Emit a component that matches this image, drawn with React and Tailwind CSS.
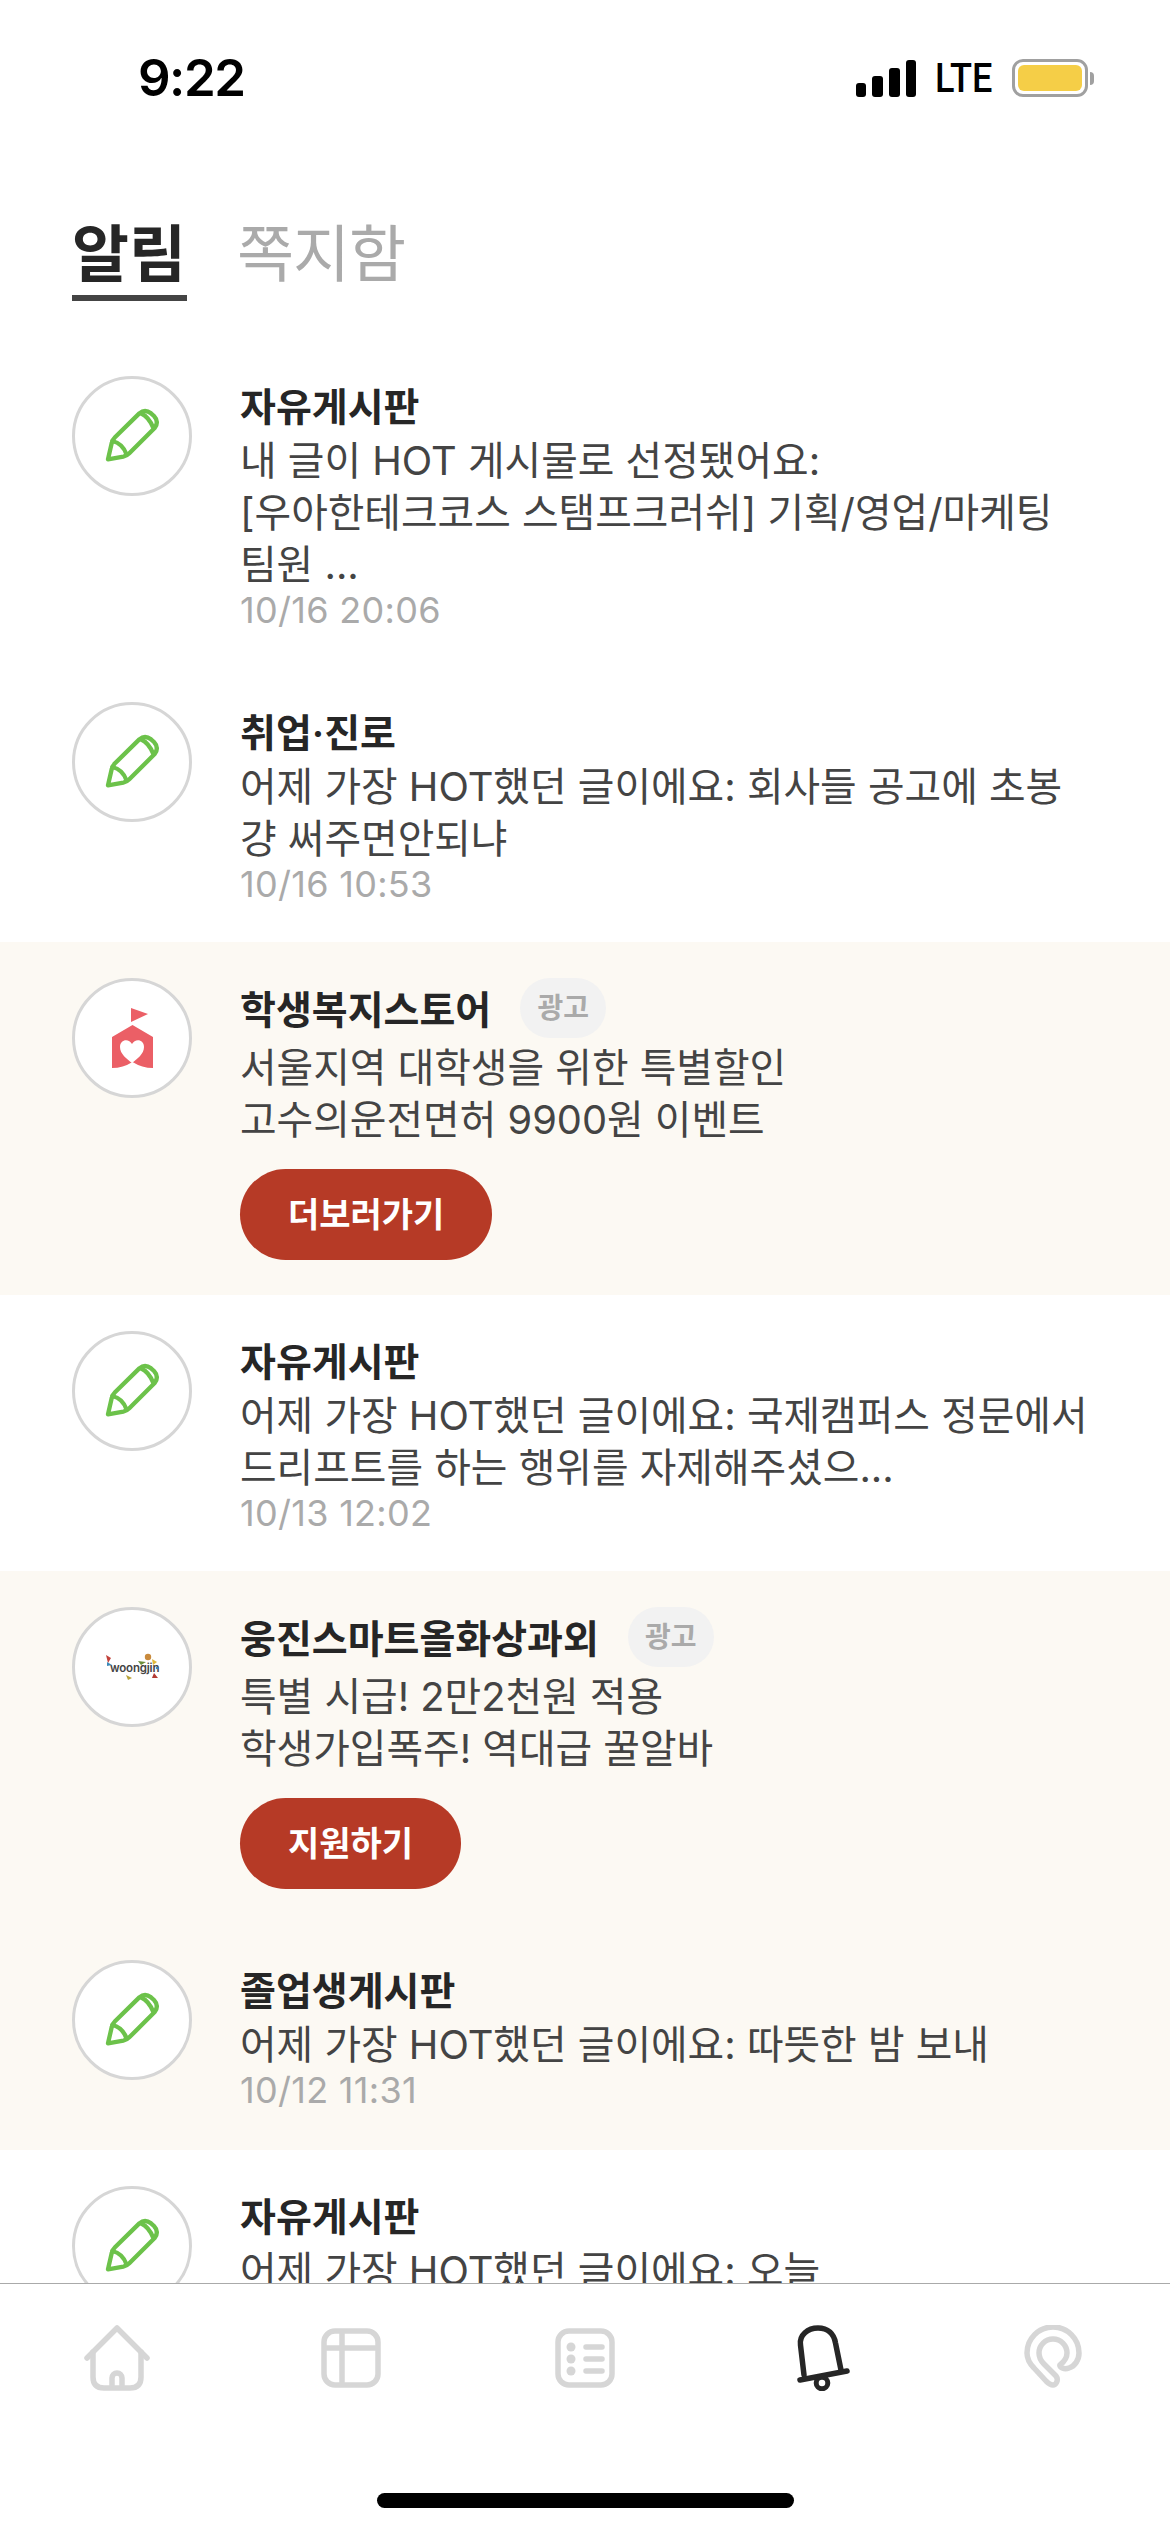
import React from 'react';

const PencilIcon = () => (
  <svg width="56" height="56" viewBox="162 144 168 168" fill="none" stroke="#6CC24A" strokeWidth="13" strokeLinejoin="round" strokeLinecap="round">
    <path d="M174 298 L185 250 Q187 240 195 232 L268 160 Q285 146 303 160 L312 168 Q328 185 314 204 L238 280 Q230 288 220 290 Z" />
    <path d="M187 243 Q218 250 230 284" />
    <path d="M272 160 Q296 170 310 204" />
  </svg>
);

const StoreLogo = () => (
  <svg width="41" height="60" viewBox="0 0 41 60">
    <path d="M19 0 L36 6 L19 14 Z" fill="#EB5F66" />
    <path d="M20.5 17 L41 29 V60 Q30 60 20.5 54 Q11 60 0 60 V29 Z" fill="#EB5F66" />
    <path d="M20 36 C23 30 32 31 32 39 C32 46 25 51 20 55 C15 51 8 46 8 39 C8 31 17 30 20 36 Z" fill="#fff" />
  </svg>
);

const WoongjinLogo = () => (
  <svg width="56" height="28" viewBox="0 0 56 28">
    <text x="6" y="19" fontSize="11.5" fontWeight="600" fill="#444" fontFamily="Inter, sans-serif" letterSpacing="-0.2">woongjin</text>
    <circle cx="44" cy="4" r="3.2" fill="#C98A3C" />
    <path d="M34 8 L42 9 L37 12 Z" fill="#6B8E3A" />
    <path d="M48 6 L53 9 L49 12 Z" fill="#E2B93B" />
    <path d="M2 2 L7 5 L4 10 Z" fill="#C2413A" />
    <path d="M3 9 L8 12 L3 13 Z" fill="#3C89B8" />
    <path d="M22 22 L28 25 L24 27 Z" fill="#B7A23A" />
    <path d="M50 20 L54 25 L48 25 Z" fill="#B23A33" />
    <circle cx="53" cy="15" r="1.2" fill="#3C89B8" />
  </svg>
);

const NavIcons = {
  home: (
    <svg width="66" height="66" viewBox="0 0 66 66" fill="none" stroke="#D6D6D6" strokeWidth="5.5" strokeLinecap="round" strokeLinejoin="round">
      <path d="M3 33 L33 3 L63 33" />
      <path d="M9 27 V52 Q9 63 20 63 H46 Q57 63 57 52 V27" />
      <path d="M28 63 V53 a5 5 0 0 1 10 0 V63" strokeLinecap="butt" />
    </svg>
  ),
  table: (
    <svg width="66" height="66" viewBox="-3 -3 66 66" fill="none" stroke="#D6D6D6" strokeWidth="5.5">
      <rect x="3" y="3" width="54" height="54" rx="11" />
      <path d="M3 20 H57 M21 3 V57" />
    </svg>
  ),
  list: (
    <svg width="66" height="66" viewBox="-3 -3 66 66" fill="none" stroke="#D6D6D6" strokeWidth="5.5" strokeLinecap="round">
      <rect x="3" y="3" width="54" height="54" rx="11" />
      <path d="M31 19 H47 M31 31 H47 M31 43 H47" />
      <circle cx="16" cy="19" r="4.5" fill="#D6D6D6" stroke="none" />
      <circle cx="16" cy="31" r="4.5" fill="#D6D6D6" stroke="none" />
      <circle cx="16" cy="43" r="4.5" fill="#D6D6D6" stroke="none" />
    </svg>
  ),
  bell: (
    <svg width="66" height="66" viewBox="-11 0 66 66" fill="none" stroke="#262626" strokeWidth="5.5" strokeLinecap="round">
      <path d="M7 50 L3.5 20 C2 10 11 3 21 3 C31 3 37 9 38.5 18 L44 45" />
      <path d="M3 55 L50 46" />
      <circle cx="25" cy="58" r="5.8" strokeWidth="5" />
    </svg>
  ),
  pin: (
    <svg width="66" height="66" viewBox="-4 0 66 66" fill="none" stroke="#D6D6D6" strokeWidth="5.5" strokeLinecap="round" strokeLinejoin="round">
      <path d="M36 40 C41 36 43 33 43 28 A14 14 0 0 0 15 28 C15 33 17 36 20 39 L32 51 C35 55 32 60 29 60 C26 60 24 58 22 56 L10 43 C5 38 3 34 3 28 A26 26 0 0 1 55 28 C55 35 51 41 45 43 C40 45 35 42 36 40" />
    </svg>
  ),
};

const items = [
  { title: '자유게시판', pb: 'pb-[36px]', lines: ['내 글이 HOT 게시물로 선정됐어요:', '[우아한테크코스 스탬프크러쉬] 기획/영업/마케팅', '팀원 ...'], date: '10/16 20:06' },
  { title: '취업·진로', pb: 'pb-[38px]', lines: ['어제 가장 HOT했던 글이에요: 회사들 공고에 초봉', '걍 써주면안되냐'], date: '10/16 10:53' },
  { title: '학생복지스토어', ad: true, pb: 'pb-[35px]', logo: <StoreLogo />, lines: ['서울지역 대학생을 위한 특별할인', '고수의운전면허 9900원 이벤트'], button: '더보러가기' },
  { title: '자유게시판', pb: 'pb-[38px]', lines: ['어제 가장 HOT했던 글이에요: 국제캠퍼스 정문에서', '드리프트를 하는 행위를 자제해주셨으...'], date: '10/13 12:02' },
  { title: '웅진스마트올화상과외', ad: true, pb: 'pb-[35px]', logo: <WoongjinLogo />, lines: ['특별 시급! 2만2천원 적용', '학생가입폭주! 역대급 꿀알바'], button: '지원하기' },
  { title: '졸업생게시판', beige: true, pb: 'pb-[40px]', lines: ['어제 가장 HOT했던 글이에요: 따뜻한 밤 보내'], date: '10/12 11:31' },
  { title: '자유게시판', pb: 'pb-[38px]', lines: ['어제 가장 HOT했던 글이에요: 오늘'] },
];

const Row = ({ item }) => (
  <div className={`flex gap-[48px] pl-[72px] pt-[36px] ${item.ad || item.beige ? 'bg-[#FCF9F3]' : 'bg-white'} ${item.pb}`}>
    <div className="w-[120px] h-[120px] shrink-0 rounded-full border-[3px] border-[#D6D6D6] bg-white flex items-center justify-center">
      {item.logo || <PencilIcon />}
    </div>
    <div className="flex flex-col items-start">
      <div className={`flex items-center gap-[29px] ${item.ad ? 'h-[60px] mb-[4px]' : 'h-[59px]'}`}>
        <span className="pt-[3px] text-[39px] leading-[52px] font-semibold text-[#262626]">{item.title}</span>
        {item.ad && (
          <span className="h-[60px] w-[86px] rounded-[30px] bg-[#F2F2F2] text-[28px] font-semibold text-[#AAAAAA] flex items-center justify-center">광고</span>
        )}
      </div>
      {item.lines.map((line) => (
        <div key={line} className="text-[39.8px] leading-[52px] text-[#444444] whitespace-nowrap">{line}</div>
      ))}
      {item.date && <div className="text-[36px] leading-[39px] tracking-[0.3px] text-[#AAAAAA]">{item.date}</div>}
      {item.button && (
        <div className="mt-[23px] h-[91px] px-[48px] rounded-full bg-[#B63A26] text-white text-[34px] font-semibold flex items-center">{item.button}</div>
      )}
    </div>
  </div>
);

export default function App() {
  return (
    <div className="w-[1170px] h-[2532px] bg-white flex flex-col overflow-hidden font-['Inter','Noto_Sans_CJK_KR',sans-serif]">
      {/* 상태바 */}
      <div className="mt-[48px] h-[60px] shrink-0 flex items-center justify-between pl-[138px] pr-[76px] text-black">
        <span className="text-[51px] font-semibold tracking-[-1.5px]">9:22</span>
        <div className="flex items-center">
          <div className="flex items-end gap-[6px] h-[37px]">
            <div className="w-[10px] h-[14px] rounded-[3px] bg-black" />
            <div className="w-[11px] h-[21px] rounded-[3px] bg-black" />
            <div className="w-[11px] h-[29px] rounded-[3px] bg-black" />
            <div className="w-[10px] h-[37px] rounded-[3px] bg-black" />
          </div>
          <span className="ml-[19px] w-[58px] text-[41px] leading-none font-medium font-['Roboto',sans-serif] whitespace-nowrap origin-left scale-x-[0.88]">LTE</span>
          <div className="ml-[19px] w-[76px] h-[38px] rounded-[11px] border-[3px] border-[#A0A0A0] p-[3px]">
            <div className="w-full h-full rounded-[6px] bg-[#F5CE47]" />
          </div>
          <div className="w-[4px] h-[13px] rounded-r-full bg-[#A0A0A0] ml-[2px]" />
        </div>
      </div>

      {/* 탭 */}
      <div className="mt-[109px] shrink-0 flex gap-[50px] pl-[72px] items-start">
        <div className="w-[115px] h-[84px] pt-[3px] border-b-[6px] border-[#444444] text-[62px] leading-[70px] font-bold text-[#262626] whitespace-nowrap">알림</div>
        <div className="pt-[3px] text-[62px] leading-[70px] tracking-[-1px] text-[#AAAAAA] whitespace-nowrap">쪽지함</div>
      </div>

      {/* 목록 */}
      <div className="mt-[39px] flex-1 min-h-0 overflow-hidden">
        {items.map((item, i) => (
          <Row key={i} item={item} />
        ))}
      </div>

      {/* 하단 탭바 */}
      <div className="h-[249px] shrink-0 bg-white border-t border-[#AAAAAA] flex flex-col">
        <div className="mt-[41px] grid grid-cols-5">
          {['home', 'table', 'list', 'bell', 'pin'].map((name) => (
            <div key={name} className="flex justify-center">{NavIcons[name]}</div>
          ))}
        </div>
        <div className="mt-[102px] mx-auto w-[417px] h-[15px] rounded-full bg-black" />
      </div>
    </div>
  );
}
